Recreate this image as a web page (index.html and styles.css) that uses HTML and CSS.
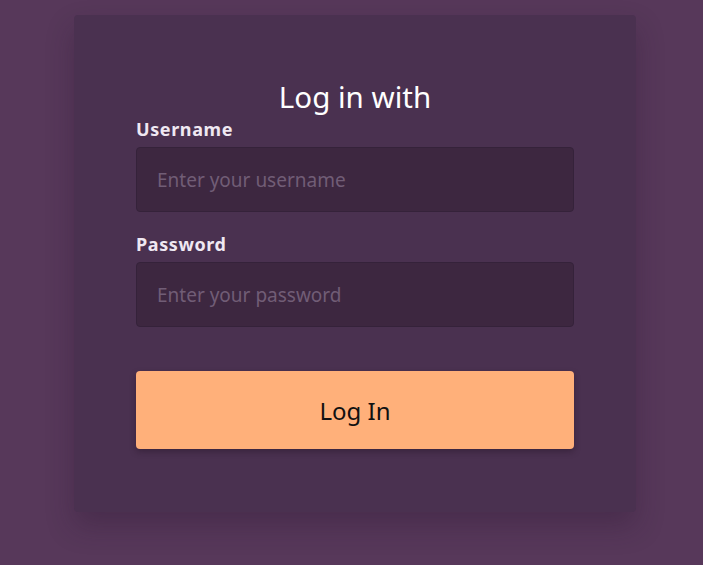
FILE: index.html
```html
<!DOCTYPE html>
<html lang="en">
<head>
    <meta name='viewport' content='width=device-width, initial-scale=1'>
    <link rel="stylesheet" href="styles.css">
    <title>Log in</title>
</head>
<body>
<main class="card">
    <h1>Log in with</h1>
    <form class="loginForm">
        <label for="username">Username</label>
        <input id="username" type="text" placeholder="Enter your username">
        <label for="password">Password</label>
        <input id="password" type="password" placeholder="Enter your password">
        <button type="submit" class="btnLogin">Log In</button>
    </form>
</main>
</body>
</html>
```

FILE: styles.css
```css
/* @formatter:off */
html, body { margin: 0; padding: 0; font-family: "Noto Sans", "Lato", sans-serif; }
body { background-color: #57385a; min-height: 100vh; padding: 15px 0 0 74px; box-sizing: border-box; }
.card { width: 562px; box-sizing: border-box; padding: 62px 62px 63px; background-color: #4a3150; border-radius: 4px; box-shadow: 0 14px 28px rgba(40, 20, 45, .3); }
h1 { margin: 0; font-size: 29.5px; font-weight: 400; line-height: 40px; color: #fff; text-align: center; }
.loginForm { display: flex; flex-direction: column; }
label { font-size: 18px; font-weight: 700; line-height: 24px; letter-spacing: .6px; color: #efe8f2; margin-bottom: 6px; }
label + input + label { margin-top: 20px; }
input { height: 65px; box-sizing: border-box; padding: 0 20px; font: inherit; font-size: 19px; color: #eee; background-color: #3d2740; border: 1px solid #35223a; border-radius: 4px; outline: none; }
input::placeholder { color: #715d76; }
.btnLogin { margin-top: 44px; height: 78px; font: inherit; font-size: 24px; color: #111; background-color: #ffb07a; border: 0; border-radius: 4px; box-shadow: 0 3px 6px rgba(30, 15, 30, .35); cursor: pointer; }
/* @formatter:on */
```
